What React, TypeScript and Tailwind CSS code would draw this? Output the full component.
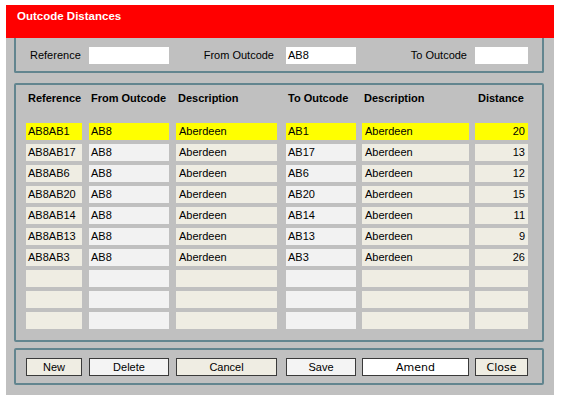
type Row = {
    ref: string;
    from: string;
    fromDesc: string;
    to: string;
    toDesc: string;
    distance: string;
    selected?: boolean;
};

const ROWS: Row[] = [
    { ref: 'AB8AB1', from: 'AB8', fromDesc: 'Aberdeen', to: 'AB1', toDesc: 'Aberdeen', distance: '20', selected: true },
    { ref: 'AB8AB17', from: 'AB8', fromDesc: 'Aberdeen', to: 'AB17', toDesc: 'Aberdeen', distance: '13' },
    { ref: 'AB8AB6', from: 'AB8', fromDesc: 'Aberdeen', to: 'AB6', toDesc: 'Aberdeen', distance: '12' },
    { ref: 'AB8AB20', from: 'AB8', fromDesc: 'Aberdeen', to: 'AB20', toDesc: 'Aberdeen', distance: '15' },
    { ref: 'AB8AB14', from: 'AB8', fromDesc: 'Aberdeen', to: 'AB14', toDesc: 'Aberdeen', distance: '11' },
    { ref: 'AB8AB13', from: 'AB8', fromDesc: 'Aberdeen', to: 'AB13', toDesc: 'Aberdeen', distance: '9' },
    { ref: 'AB8AB3', from: 'AB8', fromDesc: 'Aberdeen', to: 'AB3', toDesc: 'Aberdeen', distance: '26' },
    { ref: '', from: '', fromDesc: '', to: '', toDesc: '', distance: '' },
    { ref: '', from: '', fromDesc: '', to: '', toDesc: '', distance: '' },
    { ref: '', from: '', fromDesc: '', to: '', toDesc: '', distance: '' },
];

// column geometry: width + gap to the left, shared by header, rows and buttons
const COLS = [
    { w: 'w-[56px]', ml: 'ml-0', bg: 'bg-[#efede3]' },
    { w: 'w-[80px]', ml: 'ml-[7px]', bg: 'bg-[#f2f2f2]' },
    { w: 'w-[101px]', ml: 'ml-[7px]', bg: 'bg-[#efede3]' },
    { w: 'w-[70px]', ml: 'ml-[9px]', bg: 'bg-[#f2f2f2]' },
    { w: 'w-[107px]', ml: 'ml-[6px]', bg: 'bg-[#efede3]' },
    { w: 'w-[53px]', ml: 'ml-[6px]', bg: 'bg-[#efede3]' },
];

const HEADERS = ['Reference', 'From Outcode', 'Description', 'To Outcode', 'Description', 'Distance'];

const BUTTONS = [
    { label: 'New', bg: 'bg-[#efede3]', font: '' },
    { label: 'Delete', bg: 'bg-[#f4f4f4]', font: '' },
    { label: 'Cancel', bg: 'bg-[#efede3]', font: '' },
    { label: 'Save', bg: 'bg-[#f4f4f4]', font: '' },
    { label: 'Amend', bg: 'bg-white', font: "font-['DejaVu_Sans',sans-serif] text-[11px]" },
    { label: 'Close', bg: 'bg-[#efede3]', font: "font-['DejaVu_Sans',sans-serif] text-[11px]" },
];

export default function App() {
    return (
        <div className="w-[568px] h-[404px] bg-white pl-[6px] pt-[5px] font-['Liberation_Sans',Arial,sans-serif] text-[11px] text-black">
            <div className="w-[548px] flex flex-col">
                {/* Title bar */}
                <div className="h-[33px] bg-[#ff0000] pl-[11px] pt-[3px]">
                    <span className="text-white font-bold text-[11.5px]">Outcode Distances</span>
                </div>

                {/* Body */}
                <div className="h-[357px] bg-[#c0c0c0] pl-[8px] pr-[10px] flex flex-col">
                    {/* Search fields */}
                    <div className="h-[35px] border-2 border-t-0 border-[#62858f] rounded-b-[2px] flex items-center pl-[14px] pt-[2px]">
                        <span className="w-[59px]">Reference</span>
                        <div className="w-[80px] h-[17px] bg-white" />
                        <span className="w-[117px] text-right pr-[12px]">From Outcode</span>
                        <div className="w-[70px] h-[17px] bg-white flex items-center pl-[2px]">AB8</div>
                        <span className="w-[119px] text-right pr-[8px]">To Outcode</span>
                        <div className="w-[53px] h-[17px] bg-white" />
                    </div>

                    {/* Grid */}
                    <div className="mt-[10px] h-[259px] border-2 border-[#62858f] rounded-[2px] pl-[10px] flex flex-col">
                        <div className="h-[26px] flex items-center font-bold">
                            {HEADERS.map((h, i) => (
                                <div key={i} className={`${COLS[i].w} ${COLS[i].ml} ${i === 5 ? 'pl-[3px]' : 'pl-[2px]'} whitespace-nowrap`}>
                                    {h}
                                </div>
                            ))}
                        </div>
                        <div className="mt-[12px] flex flex-col gap-[4px]">
                            {ROWS.map((row, r) => {
                                const values = [row.ref, row.from, row.fromDesc, row.to, row.toDesc, row.distance];
                                return (
                                    <div key={r} className="flex h-[17px]">
                                        {values.map((v, i) => (
                                            <div
                                                key={i}
                                                className={`${COLS[i].w} ${COLS[i].ml} ${row.selected ? 'bg-[#ffff00]' : COLS[i].bg} h-full flex items-center whitespace-nowrap ${
                                                    i === 5 ? 'justify-end pr-[3px]' : i === 2 || i === 4 ? 'pl-[3px]' : 'pl-[2px]'
                                                }`}
                                            >
                                                {v}
                                            </div>
                                        ))}
                                    </div>
                                );
                            })}
                        </div>
                    </div>

                    {/* Buttons */}
                    <div className="mt-[6px] h-[37px] border-2 border-[#62858f] rounded-[2px] pl-[10px] pt-[8px] flex">
                        {BUTTONS.map((b, i) => (
                            <button
                                key={b.label}
                                className={`${COLS[i].w} ${COLS[i].ml} ${b.bg} ${b.font} h-[18px] border border-[#3a3a3a] flex items-center justify-center leading-none`}
                            >
                                {b.label}
                            </button>
                        ))}
                    </div>
                </div>
            </div>
        </div>
    );
}
